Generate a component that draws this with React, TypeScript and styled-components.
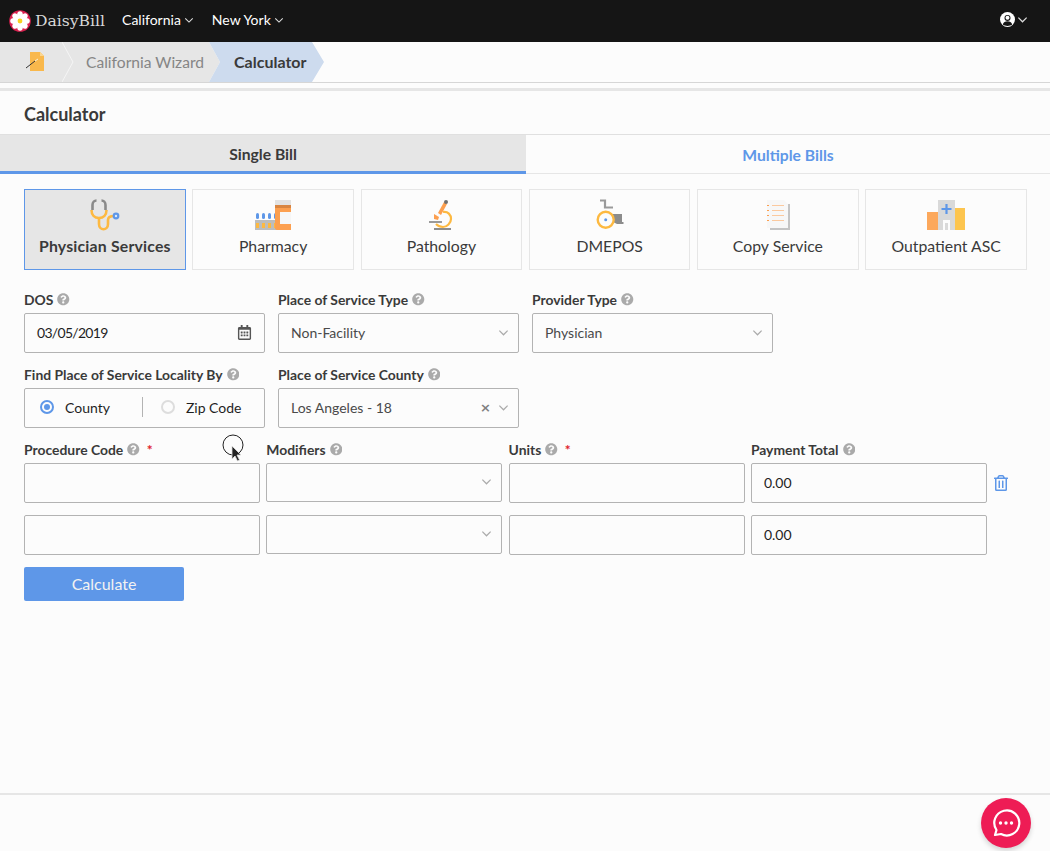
import styled, { createGlobalStyle } from 'styled-components'
import { FaQuestionCircle, FaRegTrashAlt, FaRegCalendarAlt } from 'react-icons/fa'
import type { ReactNode } from 'react'

const GlobalStyle = createGlobalStyle`
  html, body { margin: 0; padding: 0; background: #fcfcfc; }
  * { box-sizing: border-box; }
  body { font-family: Lato, "Liberation Sans", sans-serif; color: #3a3a3a; }
`

const Page = styled.div`
  position: relative;
  height: 851px;
  overflow: hidden;
  display: flex;
  flex-direction: column;
`

const TopBar = styled.header`
  height: 42px;
  background: #151515;
  display: flex;
  align-items: center;
  padding: 0 22px 0 9px;
  color: #fff;
`

const Logo = styled.div`
  display: flex;
  align-items: center;
  gap: 4px;
  margin-right: 17px;
  font-family: "DejaVu Serif", serif;
  font-size: 15.6px;
  color: #d8d8d8;
`

const NavItem = styled.div`
  display: flex;
  align-items: center;
  gap: 3px;
  padding-bottom: 3px;
  font-size: 14px;
  margin-right: 18px;
  color: #fff;
`

const UserMenu = styled.div`
  margin-left: auto;
  display: flex;
  align-items: center;
  gap: 2px;
  padding-bottom: 3px;
  color: #fff;
`

const Crumbs = styled.nav`
  height: 41px;
  background: #fcfcfc;
  border-bottom: 1px solid #d6d6d6;
  display: flex;
`

const HomeCrumb = styled.div`
  width: 74px;
  background: #e6e6e6;
  display: flex;
  align-items: center;
  padding-left: 25px;
  position: relative;
`

const CrumbDivider = styled.svg`
  position: absolute;
  right: 0;
  top: 0;
`

const WizardCrumb = styled.div`
  width: 146px;
  padding: 0 0 1px 12px;
  background: #e6e6e6;
  clip-path: polygon(0 0, 135px 0, 146px 50%, 135px 100%, 0 100%);
  display: flex;
  align-items: center;
  font-size: 15.6px;
  color: #858585;
`

const ActiveCrumb = styled.div`
  width: 115px;
  margin-left: -11px;
  padding: 0 0 2px 25px;
  background: #cddbee;
  clip-path: polygon(0 0, 103px 0, 115px 50%, 103px 100%, 0 100%, 11px 50%);
  display: flex;
  align-items: center;
  font-size: 16px;
  font-weight: 700;
  color: #3a3a3a;
`

const Band = styled.div`
  height: 3px;
  margin-top: 5px;
  background: #e6e6e6;
`

const Title = styled.h1`
  margin: 0;
  padding: 12px 24px 0;
  height: 43px;
  font-size: 18px;
  font-weight: 700;
  line-height: 22px;
  color: #3a3a3a;
`

const Tabs = styled.div`
  display: grid;
  grid-template-columns: 526px 1fr;
  height: 40px;
`

const Tab = styled.div<{ $active?: boolean }>`
  display: flex;
  align-items: center;
  justify-content: center;
  font-size: 15.7px;
  font-weight: 700;
  background: ${(p) => (p.$active ? '#e6e6e6' : '#fcfcfc')};
  color: ${(p) => (p.$active ? '#3a3a3a' : '#5e97e8')};
  border-top: 1px solid #e0e0e0;
  border-bottom: ${(p) => (p.$active ? '3px solid #5e97e8' : '1px solid #e6e6e6')};
  padding-top: ${(p) => (p.$active ? 2 : 1)}px;
`

const TileRow = styled.div`
  display: grid;
  grid-template-columns: repeat(6, 1fr);
  gap: 6.6px;
  margin: 15px 23px 0 24px;
`

const Tile = styled.div<{ $active?: boolean }>`
  height: 81px;
  border: 1px solid ${(p) => (p.$active ? '#5e97e8' : '#e6e6e6')};
  background: ${(p) => (p.$active ? '#e6e6e6' : '#fcfcfc')};
  display: flex;
  flex-direction: column;
  align-items: center;
  padding-top: 9px;
  font-size: 15.8px;
  letter-spacing: ${(p) => (p.$active ? '0.2px' : '0')};
  font-weight: ${(p) => (p.$active ? 700 : 400)};
  color: #3a3a3a;
`

const TileIcon = styled.svg`
  height: 32px;
  margin-bottom: 5px;
  display: block;
`

const FormRow = styled.div<{ $top: number }>`
  display: grid;
  grid-template-columns: repeat(3, 241px);
  gap: 13px;
  margin: ${(p) => p.$top}px 24px 0;
`

const Field = styled.div`
  display: flex;
  flex-direction: column;
`

const Label = styled.label`
  display: flex;
  align-items: center;
  gap: 4px;
  height: 15px;
  margin-bottom: 5px;
  padding-bottom: 2px;
  font-size: 13.9px;
  font-weight: 700;
  color: #3a3a3a;
  svg { color: #aaa; font-size: 12.500px; }
`

const Required = styled.span`
  color: #e0202a;
  margin-left: 3px;
`

const Control = styled.div<{ $h?: number; $left?: number }>`
  height: ${(p) => p.$h ?? 40}px;
  border: 1px solid #b3b3b3;
  border-radius: 2px;
  background: #fcfcfc;
  display: flex;
  align-items: center;
  padding: 0 9px 2px ${(p) => p.$left ?? 12}px;
  font-size: 14px;
  color: #1f1f1f;
`

const SelectValue = styled.span`
  flex: 1;
  color: #4a4a4a;
`

const DateValue = styled.span`
  flex: 1;
  color: #1f1f1f;
  letter-spacing: -0.7px;
`

const ClearX = styled.span`
  font-family: "DejaVu Sans", sans-serif;
  color: #808080;
  font-size: 13px;
  font-weight: 700;
  margin-right: 7px;
`

const CalendarWrap = styled.span`
  display: flex;
  color: #555;
  font-size: 15px;
  margin-right: 3px;
`

const Radio = styled.span<{ $on?: boolean }>`
  width: 14px;
  height: 14px;
  border-radius: 50%;
  border: ${(p) => (p.$on ? '2px solid #5e97e8' : '2px solid #ddd')};
  display: flex;
  align-items: center;
  justify-content: center;
  margin-right: 11px;
  &::after {
    content: '';
    display: ${(p) => (p.$on ? 'block' : 'none')};
    width: 6px;
    height: 6px;
    border-radius: 50%;
    background: #5e97e8;
  }
`

const RadioDivider = styled.span`
  width: 1px;
  height: 20px;
  background: #b3b3b3;
  margin: 0 18px 0 32px;
`

const LineGrid = styled.div<{ $top: number }>`
  display: grid;
  grid-template-columns: repeat(4, 236px);
  column-gap: 6.3px;
  margin: ${(p) => p.$top}px 24px 0;
  position: relative;
`

const Trash = styled.div`
  position: absolute;
  left: 969px;
  top: 32px;
  color: #5e97e8;
  font-size: 16px;
`

const CalcButton = styled.button`
  width: 160px;
  height: 34px;
  margin: 12px 0 0 24px;
  padding: 0 0 2px;
  border: 0;
  border-radius: 2px;
  background: #5e97e8;
  color: #f2f2f2;
  font-family: inherit;
  font-size: 16px;
  font-weight: 400;
`

const Footer = styled.div`
  position: absolute;
  left: 0;
  right: 0;
  top: 793px;
  height: 2px;
  background: #e6e6e6;
`

const ChatBubble = styled.div`
  position: absolute;
  left: 981px;
  top: 798px;
  width: 50px;
  height: 50px;
  border-radius: 50%;
  background: #ee1c55;
  box-shadow: 0 3px 5px rgba(0, 0, 0, 0.16);
  display: flex;
  align-items: center;
  justify-content: center;
`

const Cursor = styled.svg`
  position: absolute;
  left: 222px;
  top: 434px;
`

const Chevron = ({ color = '#aaa', size = 11 }: { color?: string; size?: number }) => (
  <svg width={size} height={size} viewBox="0 0 12 12" fill="none" stroke={color} strokeWidth="1.3">
    <path d="M1.5 4l4.5 4.5L10.5 4" />
  </svg>
)

const DaisyLogo = () => (
  <svg width="22" height="22" viewBox="0 0 22 22">
    <circle cx="11" cy="11" r="10.8" fill="#d91f4e" />
    {[0, 45, 90, 135, 180, 225, 270, 315].map((a) => (
      <ellipse key={a} cx="11" cy="5.2" rx="2.9" ry="4" fill="#fff" transform={`rotate(${a} 11 11)`} />
    ))}
    <circle cx="11" cy="11" r="2.4" fill="#f7d21e" />
  </svg>
)

const UserIcon = () => (
  <svg width="15" height="15" viewBox="0 0 15 15">
    <circle cx="7.5" cy="7.5" r="7.5" fill="#fff" />
    <circle cx="7.500" cy="6" r="3" fill="#151515" />
    <path d="M2.800 12.500c.6-2.400 2.500-3.200 4.700-3.200s4.100.8 4.700 3.200c-1.300 1-2.900 1.400-4.700 1.400s-3.400-.4-4.700-1.400z" fill="#151515" />
    <circle cx="7.500" cy="5.800" r="2" fill="#fff" />
  </svg>
)

const WizardIcon = () => (
  <svg width="21" height="22" viewBox="0 0 21 22">
    <path d="M5 1h10l4 4v15H5z" fill="#f9b84c" />
    <path d="M15 1l4 4h-4z" fill="#fbd68f" />
    <path d="M1 17l9-7" stroke="#333" strokeWidth="1" />
    <path d="M10 10l3-2" stroke="#f6f0d8" strokeWidth="1" />
  </svg>
)

const Stethoscope = () => (
  <TileIcon viewBox="0 0 30 32" width="30">
    <g fill="none" strokeWidth="2.6">
      <path d="M2.500 11V6c0-3 2-4.500 4-4.500M15.500 11V6c0-3-2-4.500-4-4.500" stroke="#8a8a8a" />
      <path d="M1.500 11c0 5 3 8 7.500 8s7.500-3 7.500-8" stroke="#fdb941" />
      <path d="M9 19v6c0 7 9 7 9 0v-4c0-3 2-4 6-4" stroke="#fdb941" />
    </g>
    <circle cx="26" cy="17" r="3.400" fill="#5e97e8" />
    <circle cx="26" cy="17" r="1.200" fill="#dce8fa" />
  </TileIcon>
)

const Pharmacy = () => (
  <TileIcon viewBox="0 0 36 32" width="36">
    <path d="M0 21h23v10H0z" fill="#bdbdbd" />
    {[2, 8, 14, 20].map((x) => (
      <g key={x}>
        <rect x={x - 1} y="14" width="3" height="6" rx="1.500" fill="#5e97e8" />
        <rect x={x - 1} y="24" width="3" height="5" fill="#fdb941" />
      </g>
    ))}
    <rect x="20" y="1" width="16" height="5" fill="#e3e3e3" />
    <path d="M20 6h16v25H22c-1 0-2-1-2-2z" fill="#fc9f4f" />
    <rect x="25" y="13" width="11" height="12" fill="#f6f6f6" />
    <rect x="20" y="6" width="16" height="3" fill="#d98541" />
  </TileIcon>
)

const Microscope = () => (
  <TileIcon viewBox="0 0 24 32" width="24">
    <path d="M15 3l3 2-6 11-3-2z" fill="#fc9f4f" />
    <circle cx="17" cy="3" r="2" fill="#6f6f6f" />
    <path d="M14 13c5-1 8 3 8 7s-4 8-8 8-6-2-7-3" fill="none" stroke="#fdb941" strokeWidth="2.200" />
    <rect x="0" y="22" width="13" height="2" fill="#9a9a9a" />
    <path d="M5 15l5 3-1 3-4-1z" fill="#fc9f4f" />
    <rect x="5" y="29" width="17" height="2" fill="#8c8c8c" />
  </TileIcon>
)

const Wheelchair = () => (
  <TileIcon viewBox="0 0 28 32" width="28">
    <path d="M4 1.500h5v7h8" fill="none" stroke="#9a9a9a" strokeWidth="2.200" />
    <path d="M13 15h13v8h1.500v2H21l-4-2z" fill="#8c8c8c" />
    <circle cx="9.700" cy="20.700" r="8" fill="#fcfcfc" stroke="#fdb941" strokeWidth="2.400" />
    <circle cx="9.700" cy="20.700" r="1.500" fill="#5e97e8" />
  </TileIcon>
)

const CopyDoc = () => (
  <TileIcon viewBox="0 0 24 32" width="24">
    <path d="M4 5h20v26H4z" fill="#c4c4c4" />
    <path d="M1 1h17l4 4v24H1z" fill="#f7f7f7" />
    {[6, 11, 16, 21].map((y) => (
      <g key={y}>
        <rect x="1" y={y} width="2" height="1" fill="#fc9f4f" />
        <rect x="6" y={y} width="12" height="1" fill="#fbc99e" />
      </g>
    ))}
  </TileIcon>
)

const Hospital = () => (
  <TileIcon viewBox="0 0 38 32" width="38">
    <rect x="0" y="13" width="12" height="18" fill="#fca85c" />
    <rect x="11" y="1" width="17" height="30" fill="#d9d9d9" />
    <rect x="28" y="9" width="10" height="22" fill="#fdc54f" />
    <path d="M16 21h7v10h-2v-7h-3v7h-2z" fill="#fcfcfc" />
    <path d="M19.500 5v10M14.500 10h10" stroke="#5e97e8" strokeWidth="2.200" />
  </TileIcon>
)

const tiles: { name: string; icon: ReactNode; active?: boolean }[] = [
  { name: 'Physician Services', icon: <Stethoscope />, active: true },
  { name: 'Pharmacy', icon: <Pharmacy /> },
  { name: 'Pathology', icon: <Microscope /> },
  { name: 'DMEPOS', icon: <Wheelchair /> },
  { name: 'Copy Service', icon: <CopyDoc /> },
  { name: 'Outpatient ASC', icon: <Hospital /> },
]

const Help = () => <FaQuestionCircle />

export default function App() {
  return (
    <Page>
      <GlobalStyle />
      <TopBar>
        <Logo>
          <DaisyLogo />
          DaisyBill
        </Logo>
        <NavItem>
          California <Chevron color="#ddd" size={10} />
        </NavItem>
        <NavItem>
          New York <Chevron color="#ddd" size={10} />
        </NavItem>
        <UserMenu>
          <UserIcon />
          <Chevron color="#ddd" size={11} />
        </UserMenu>
      </TopBar>
      <Crumbs>
        <HomeCrumb>
          <WizardIcon />
          <CrumbDivider width="12" height="40" viewBox="0 0 12 40" fill="none" stroke="#f5f5f5">
            <path d="M0 0l11 20L0 40" />
          </CrumbDivider>
        </HomeCrumb>
        <WizardCrumb>California Wizard</WizardCrumb>
        <ActiveCrumb>Calculator</ActiveCrumb>
      </Crumbs>
      <Band />
      <Title>Calculator</Title>
      <Tabs>
        <Tab $active>Single Bill</Tab>
        <Tab>Multiple Bills</Tab>
      </Tabs>
      <TileRow>
        {tiles.map((t) => (
          <Tile key={t.name} $active={t.active}>
            {t.icon}
            {t.name}
          </Tile>
        ))}
      </TileRow>
      <FormRow $top={23}>
        <Field>
          <Label>DOS <Help /></Label>
          <Control>
            <DateValue>03/05/2019</DateValue>
            <CalendarWrap><FaRegCalendarAlt /></CalendarWrap>
          </Control>
        </Field>
        <Field>
          <Label>Place of Service Type <Help /></Label>
          <Control>
            <SelectValue>Non-Facility</SelectValue>
            <Chevron />
          </Control>
        </Field>
        <Field>
          <Label>Provider Type <Help /></Label>
          <Control>
            <SelectValue>Physician</SelectValue>
            <Chevron />
          </Control>
        </Field>
      </FormRow>
      <FormRow $top={15}>
        <Field>
          <Label>Find Place of Service Locality By <Help /></Label>
          <Control $left={15}>
            <Radio $on />
            County
            <RadioDivider />
            <Radio />
            Zip Code
          </Control>
        </Field>
        <Field>
          <Label>Place of Service County <Help /></Label>
          <Control>
            <SelectValue>Los Angeles - 18</SelectValue>
            <ClearX>×</ClearX>
            <Chevron />
          </Control>
        </Field>
      </FormRow>
      <LineGrid $top={15}>
        <Label>Procedure Code <Help /> <Required>*</Required></Label>
        <Label>Modifiers <Help /></Label>
        <Label>Units <Help /> <Required>*</Required></Label>
        <Label>Payment Total <Help /></Label>
        <Control />
        <Control $h={39}>
          <SelectValue />
          <Chevron />
        </Control>
        <Control />
        <Control>0.00</Control>
        <Trash><FaRegTrashAlt /></Trash>
      </LineGrid>
      <LineGrid $top={12}>
        <Control />
        <Control $h={39}>
          <SelectValue />
          <Chevron />
        </Control>
        <Control />
        <Control>0.00</Control>
      </LineGrid>
      <CalcButton>Calculate</CalcButton>
      <Footer />
      <ChatBubble>
        <svg width="30" height="30" viewBox="0 0 30 30" fill="none">
          <path d="M4 27l1.500-5A12.500 12.500 0 1 1 10 26z" stroke="#fff" strokeWidth="2.200" strokeLinejoin="round" />
          <circle cx="9.500" cy="15" r="1.700" fill="#fff" />
          <circle cx="15" cy="15" r="1.700" fill="#fff" />
          <circle cx="20.500" cy="15" r="1.700" fill="#fff" />
        </svg>
      </ChatBubble>
      <Cursor width="24" height="34" viewBox="0 0 24 34">
        <circle cx="11" cy="11" r="10" fill="none" stroke="#222" strokeWidth="1" />
        <path d="M10 12v13l3-3 2.500 5 2-1-2.500-5h4z" fill="#222" stroke="#ddd" strokeWidth="0.800" />
      </Cursor>
    </Page>
  )
}
